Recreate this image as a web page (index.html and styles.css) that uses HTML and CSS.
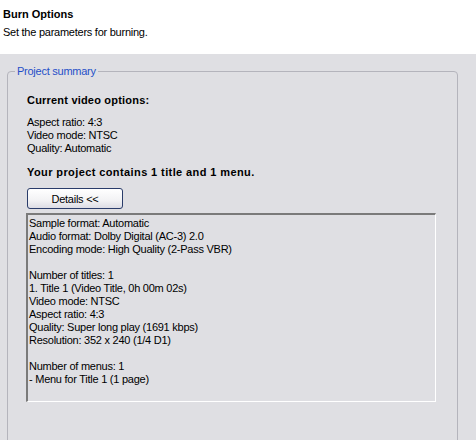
FILE: index.html
```html
<!DOCTYPE html>
<html>
<head>
<meta charset="utf-8">
<link rel="stylesheet" href="styles.css">
</head>
<body>
<div class="header">
  <div class="title">Burn Options</div>
  <div class="subtitle">Set the parameters for burning.</div>
</div>
<div class="panel">
  <div class="group">
    <span class="legend">Project summary</span>
    <div class="heading">Current video options:</div>
    <div class="info">
      <div>Aspect ratio: 4:3</div>
      <div>Video mode: NTSC</div>
      <div>Quality: Automatic</div>
    </div>
    <div class="heading summary">Your project contains 1 title and 1 menu.</div>
    <button class="btn">Details &lt;&lt;</button>
    <div class="details">
      <div>Sample format: Automatic</div>
      <div>Audio format: Dolby Digital (AC-3) 2.0</div>
      <div>Encoding mode: High Quality (2-Pass VBR)</div>
      <div class="blank"></div>
      <div>Number of titles: 1</div>
      <div>1. Title 1 (Video Title, 0h 00m 02s)</div>
      <div>Video mode: NTSC</div>
      <div>Aspect ratio: 4:3</div>
      <div>Quality: Super long play (1691 kbps)</div>
      <div>Resolution: 352 x 240 (1/4 D1)</div>
      <div class="blank"></div>
      <div>Number of menus: 1</div>
      <div>- Menu for Title 1 (1 page)</div>
    </div>
  </div>
</div>
</body>
</html>
```
FILE: styles.css
```css
html, body {
  margin: 0;
  padding: 0;
  height: 440px;
  overflow: hidden;
  background: #ffffff;
  font-family: "Liberation Sans", Arial, sans-serif;
  font-size: 11px;
  line-height: 13px;
  letter-spacing: -0.25px;
  color: #000;
}
.header {
  height: 54px;
  box-sizing: border-box;
  padding: 8px 0 0 3px;
  background: #fff;
}
.title {
  font-weight: bold;
  letter-spacing: 0;
  height: 18px;
}
.panel {
  background: #dfdfe3;
  height: 386px;
  padding-top: 17px;
  box-sizing: border-box;
  overflow: hidden;
}
.group {
  position: relative;
  margin: 0 18px 0 7px;
  height: 420px;
  border: 1px solid #b4b4bc;
  border-radius: 4px;
  padding: 22px 0 0 19px;
  box-sizing: border-box;
}
.legend {
  position: absolute;
  top: -7px;
  left: 7px;
  padding: 0 2px;
  background: #dfdfe3;
  color: #1f4fc8;
}
.heading {
  font-weight: bold;
  letter-spacing: 0.2px;
}
.info {
  margin-top: 9px;
}
.summary {
  margin-top: 11px;
  letter-spacing: 0.4px;
}
.btn {
  display: block;
  margin-top: 9px;
  width: 96px;
  height: 21px;
  padding: 0;
  font-family: inherit;
  font-size: 11px;
  letter-spacing: -0.25px;
  color: #000;
  border: 1px solid #2a3c6a;
  border-radius: 3px;
  background: linear-gradient(#ffffff, #f2f2f4 60%, #dcdce4);
}
.details {
  margin: 4px 0 0 -1px;
  width: 410px;
  height: 189px;
  box-sizing: border-box;
  border-style: solid;
  border-width: 2px 1px 1px 2px;
  border-color: #7a7a7a #ffffff #ffffff #7a7a7a;
  padding: 2px 0 0 1px;
  background: #dfdfe3;
}
.blank {
  height: 13px;
}
```
